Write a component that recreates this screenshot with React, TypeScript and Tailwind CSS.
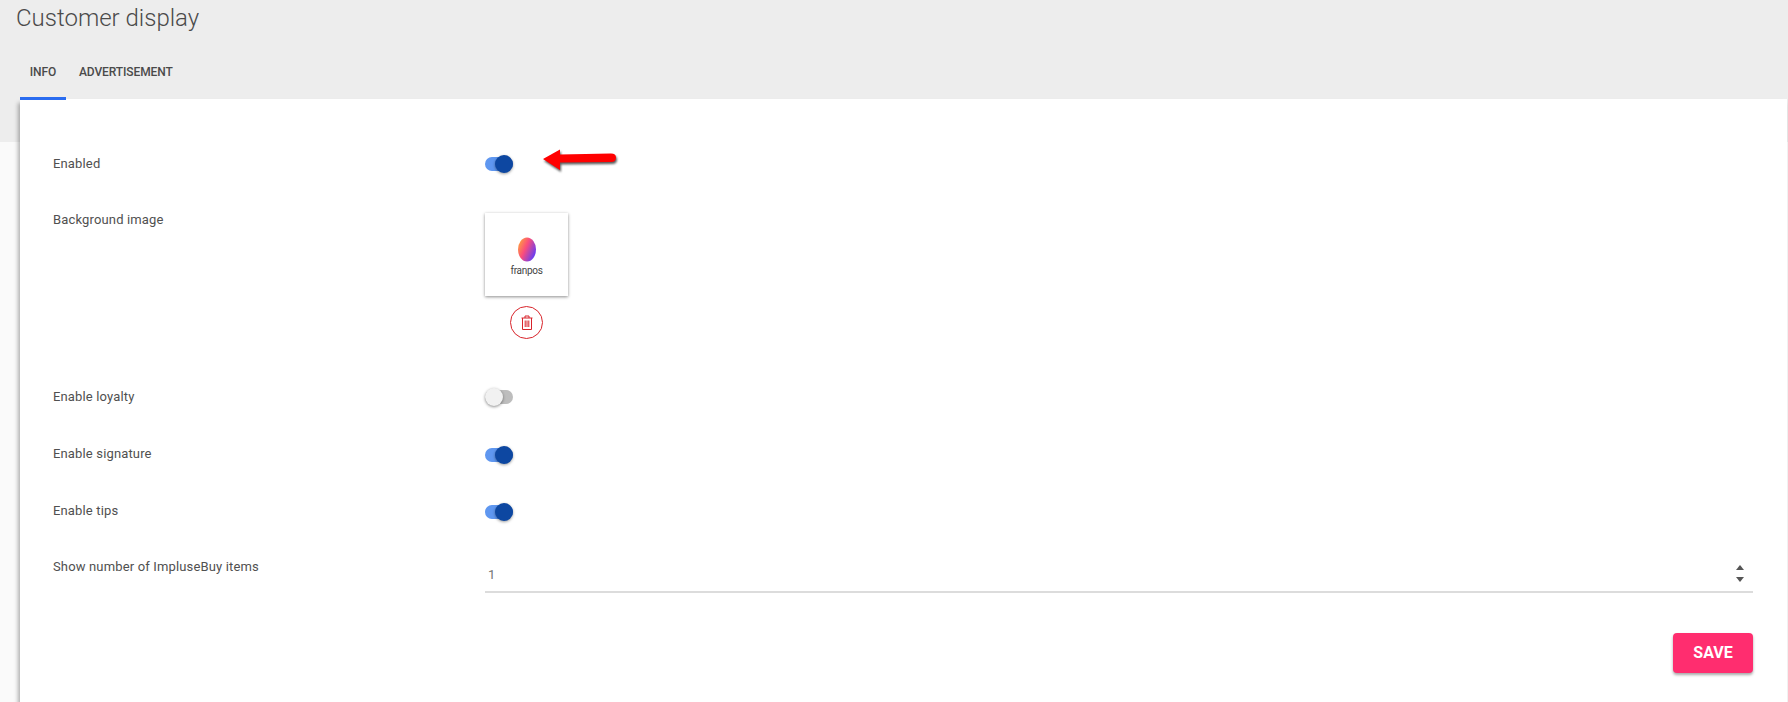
const font = "font-['Roboto',sans-serif]"

function Toggle({ on }: { on: boolean }) {
    return (
        <div className="relative w-[28px] h-5 flex items-center">
            <div className={`w-[28px] h-[14px] rounded-full ${on ? "bg-[#5f97f0]" : "bg-[#bdbdbd]"}`} />
            {on ? (
                <div className="absolute right-0 top-[1px] w-[18px] h-[18px] rounded-full bg-[#0d47a1] shadow-[0_1px_3px_rgba(0,0,0,0.4)]" />
            ) : (
                <div className="absolute left-0 top-[1px] w-[18px] h-[18px] rounded-full bg-[#f1f1f1] shadow-[0_1px_3px_rgba(0,0,0,0.45)]" />
            )}
        </div>
    )
}

function Row({ label, height, children }: { label: string; height: string; children: React.ReactNode }) {
    return (
        <div className={`flex ${height}`}>
            <div className="w-[432px] shrink-0 text-[13px] tracking-[0.15px] leading-5 text-[#505050]">{label}</div>
            <div className="flex-1 min-w-0">{children}</div>
        </div>
    )
}

export default function App() {
    return (
        <div className={`${font} h-[702px] overflow-hidden bg-[#fafafa]`}>
            {/* Grey header */}
            <div className="h-[142px] bg-[#ededed] pl-4 pt-[3px]">
                <h1 className="text-2xl leading-[30px] font-light text-[#4a4a4a]">Customer display</h1>
            </div>

            {/* Card with tabs on top */}
            <div className="-mt-[93px] ml-5 mr-px">
                <div className="relative z-10 -mb-px flex h-[51px] text-xs font-medium tracking-[-0.1px] text-[#4a4a4a]">
                    <div className="w-[46px] flex items-center justify-center border-b-[3px] border-[#2a6cf0] pb-[3px]">INFO</div>
                    <div className="ml-[13px] flex items-center pb-[6px]">ADVERTISEMENT</div>
                </div>
                <div className="h-[603px] bg-white shadow-[-2px_4px_4px_rgba(0,0,0,0.3)] pl-[33px] pr-[34px] pt-[55px]">
                    <Row label="Enabled" height="h-[56px]">
                        <div className="flex items-start">
                            <Toggle on={true} />
                            <svg width="80" height="26" viewBox="0 0 80 26" className="ml-[28px] -mt-[5px] drop-shadow-[1px_2px_1px_rgba(0,0,0,0.65)]">
                                <path d="M2 10 L19 0.5 L19 5.5 L70 4.5 Q75 4.5 75 8.5 Q75 13 70 13 L19 13.5 L19 21 Z" fill="#ff0000" />
                            </svg>
                        </div>
                    </Row>
                    <Row label="Background image" height="h-[177px]">
                        <div className="w-[83px] flex flex-col items-center mt-[3px]">
                            <div className="w-[83px] h-[83px] bg-white shadow-[0_1px_3px_rgba(0,0,0,0.45)] flex flex-col items-center pt-[24px]">
                                <svg width="20" height="25" viewBox="0 0 20 25">
                                    <defs>
                                        <linearGradient id="egg" x1="0" y1="0" x2="1" y2="0.6">
                                            <stop offset="0" stopColor="#ffb52e" />
                                            <stop offset="0.5" stopColor="#fb4d7c" />
                                            <stop offset="1" stopColor="#6a3df0" />
                                        </linearGradient>
                                    </defs>
                                    <ellipse cx="10" cy="12.5" rx="9" ry="12" fill="url(#egg)" />
                                </svg>
                                <span className="text-[10px] leading-[14px] tracking-[-0.3px] text-[#444] mt-[2px]">franpos</span>
                            </div>
                            <div className="mt-[10px] w-[33px] h-[33px] rounded-full border-[1.5px] border-[#d8232a] flex items-center justify-center">
                                <svg width="12" height="15" viewBox="0 0 12 15" fill="none" stroke="#d8232a" strokeWidth="1">
                                    <path d="M0.5 3h11M4 3V1h4v2M1.5 3v11.5h9V3M4.2 5.5v6.5M6 5.5v6.5M7.8 5.5v6.5" />
                                </svg>
                            </div>
                        </div>
                    </Row>
                    <Row label="Enable loyalty" height="h-[57px]">
                        <Toggle on={false} />
                    </Row>
                    <Row label="Enable signature" height="h-[57px]">
                        <div className="mt-px"><Toggle on={true} /></div>
                    </Row>
                    <Row label="Enable tips" height="h-[56px]">
                        <div className="mt-px"><Toggle on={true} /></div>
                    </Row>
                    <Row label="Show number of ImpluseBuy items" height="h-[76px]">
                        <div className="h-[36px] border-b-2 border-[#dcdcdc] flex items-start justify-between pl-[3px] pr-[9px] text-[13px] leading-5 text-[#757575]">
                            <span className="mt-[8px]">1</span>
                            <div className="flex flex-col gap-[7px] mt-[8px]">
                                <div className="w-0 h-0 border-x-[4.5px] border-x-transparent border-b-[5px] border-b-[#555]" />
                                <div className="w-0 h-0 border-x-[4.5px] border-x-transparent border-t-[5px] border-t-[#555]" />
                            </div>
                        </div>
                    </Row>
                    <div className="flex justify-end">
                        <button className="w-20 h-10 rounded bg-[#ff2d6f] text-white text-base font-bold shadow-[0_2px_3px_rgba(0,0,0,0.35)]">SAVE</button>
                    </div>
                </div>
            </div>
        </div>
    )
}
